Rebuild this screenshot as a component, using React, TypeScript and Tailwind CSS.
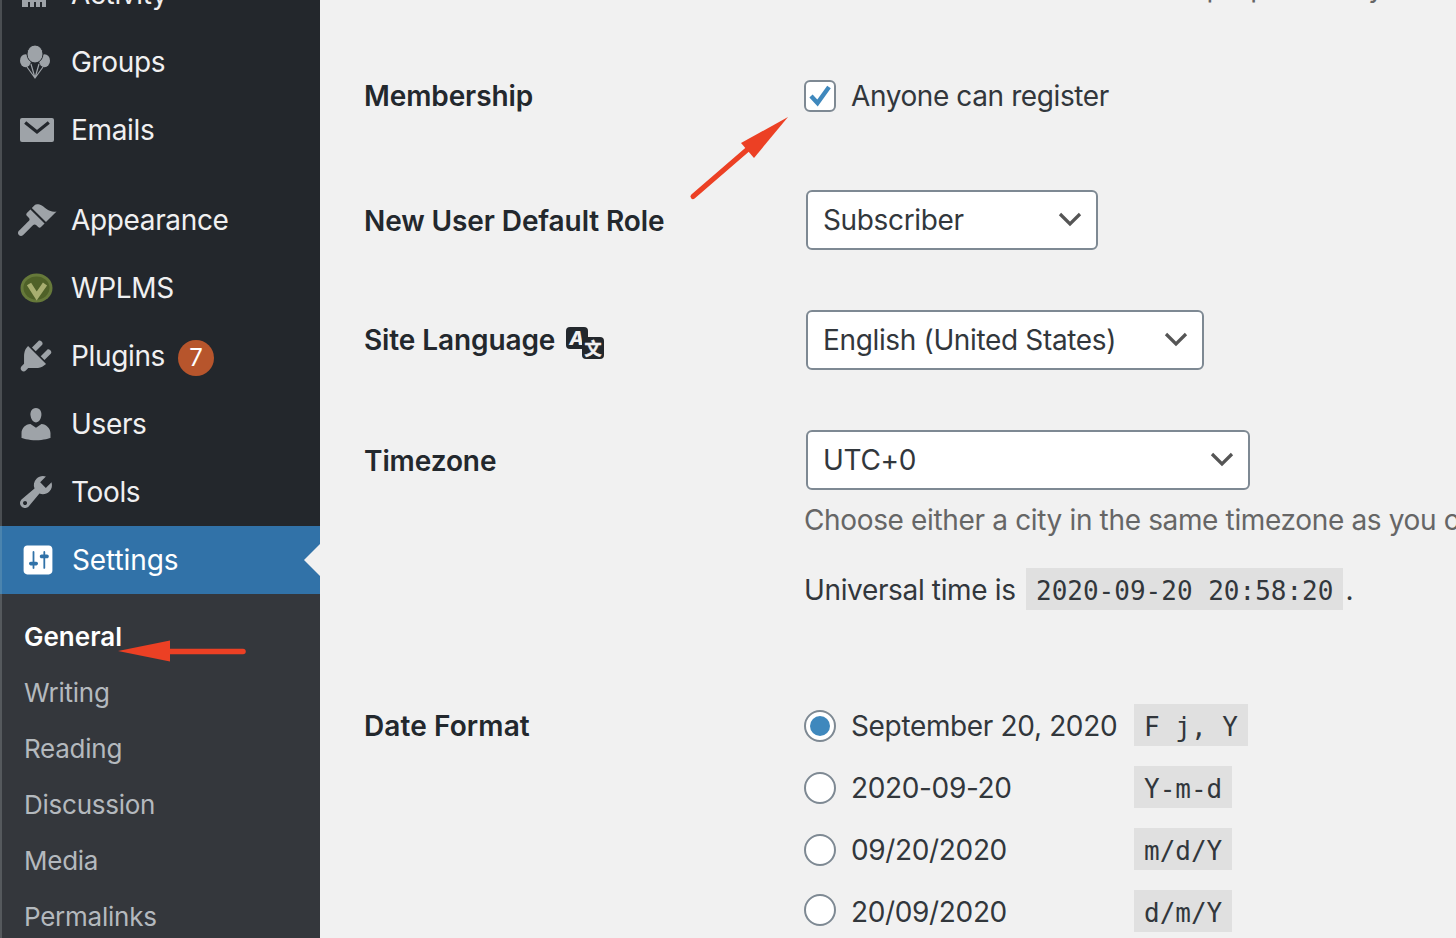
import React from "react";

const sans = "font-['Inter','Liberation_Sans',sans-serif]";

function Dash({ d, className = "w-10 h-10" }: { d: string; className?: string }) {
  return (
    <svg viewBox="0 0 20 20" className={className} fill="currentColor">
      <path d={d} />
    </svg>
  );
}

const IconActivity = () => (
  <svg viewBox="0 0 40 40" className="w-10 h-10" fill="currentColor">
    <path d="M6 24h4v-4h3v4h3v-6h4v6h3v-3h4v3h3v9h-4v-5h-2v5h-4v-5h-2v5h-4v-5h-2v5H6z" />
  </svg>
);

const IconGroups = () => (
  <svg viewBox="0 0 40 40" className="w-10 h-10" fill="currentColor">
    <ellipse cx="9.5" cy="18.7" rx="5.5" ry="6.5" />
    <ellipse cx="28.5" cy="18.7" rx="5.5" ry="6.5" />
    <ellipse cx="19" cy="12" rx="8" ry="9" stroke="#23272c" strokeWidth="1" />
    <path d="M15 22l4 14 4-14M11 25l8 11 8-11" fill="none" stroke="currentColor" strokeWidth="1.2" strokeLinejoin="round" />
  </svg>
);

const IconEmail = () => (
  <svg viewBox="0 0 20 20" className="w-10 h-10">
    <rect x="2" y="4" width="17" height="12" rx="1" fill="currentColor" />
    <path d="M4.6 6.2 10.5 11l5.9-4.8" fill="none" stroke="#23272c" strokeWidth="1.6" />
  </svg>
);

const IconWplms = () => (
  <svg viewBox="0 0 44 40" className="w-[44px] h-10 -ml-[2px] -mr-[2px]">
    <ellipse cx="22.5" cy="20" rx="16" ry="14.5" fill="#66793a" />
    <ellipse cx="22.5" cy="20" rx="13" ry="11.5" fill="#4f6128" />
    <path d="M15 16l7.7 12L31 16" fill="none" stroke="#a8ae70" strokeWidth="5" />
  </svg>
);

const IconTranslate = () => (
  <svg viewBox="0 0 40 34" className="w-10 h-[34px] ml-[11px] mt-[7px] shrink-0">
    <rect x="0" y="0" width="22" height="22" rx="4" fill="#23282d" />
    <text
      x="10.5"
      y="18"
      textAnchor="middle"
      fill="#f1f1f1"
      fontSize="19"
      fontWeight="800"
      fontStyle="italic"
      fontFamily="Inter, sans-serif"
    >
      A
    </text>
    <rect x="16" y="10" width="22" height="22" rx="4" fill="#23282d" />
    <text
      x="27"
      y="27.5"
      textAnchor="middle"
      fill="#f1f1f1"
      stroke="#f1f1f1"
      strokeWidth="0.5"
      fontSize="17"
      fontWeight="700"
      fontFamily="'Noto Sans CJK SC', sans-serif"
    >
      文
    </text>
  </svg>
);

const appearance =
  "M14.48 11.06L7.41 3.99l1.5-1.5c.5-.56 2.3-.47 3.51.32 1.21.8 1.43 1.28 2.91 2.1 1.18.64 2.45 1.26 4.45.85zm-.71.71L6.7 4.7 4.93 6.47c-.39.39-.39 1.02 0 1.41l1.06 1.06c.39.39.39 1.03 0 1.42-.6.6-5.06 5.06-5.06 5.06-.59.59-.59 1.54 0 2.12.59.59 1.53.59 2.12 0 0 0 4.46-4.46 5.06-5.06.39-.39 1.03-.39 1.42 0l1.06 1.06c.39.39 1.02.39 1.41 0z";
const plugins =
  "M13.11 4.36L9.87 7.6 8 5.73l3.24-3.24c.35-.34 1.05-.2 1.56.32.52.51.66 1.21.31 1.55zm-8 1.77l.91-1.12 9.01 9.01-1.19.84c-.71.71-2.63 1.16-3.82 1.16H6.14L4.9 17.26c-.59.59-1.54.59-2.12 0-.59-.58-.59-1.53 0-2.12l1.24-1.24v-3.88c0-1.13.4-3.19 1.09-3.89zm7.26 3.97l3.24-3.24c.34-.35 1.04-.21 1.55.31.52.51.66 1.21.31 1.55l-3.24 3.25z";
const users =
  "M10 9.25c-2.27 0-2.73-3.44-2.73-3.44C7 4.02 7.82 2 9.97 2c2.16 0 2.98 2.02 2.71 3.81 0 0-.41 3.44-2.68 3.44zm0 2.57L12.72 10c2.39 0 4.52 2.33 4.52 4.53v2.49s-3.65 1.13-7.24 1.13c-3.65 0-7.24-1.13-7.24-1.13v-2.49c0-2.25 1.94-4.48 4.47-4.48z";
const tools =
  "M16.68 9.77c-1.34 1.34-3.3 1.67-4.95.99l-5.41 6.52c-.99.99-2.59.99-3.58 0s-.99-2.59 0-3.58l6.52-5.42c-.68-1.65-.35-3.61.99-4.95 1.28-1.28 3.12-1.62 4.72-1.06l-2.89 2.89 2.82 2.82 2.86-2.87c.53 1.58.18 3.39-1.08 4.66zM3.81 16.21c.4.39 1.04.39 1.43 0 .4-.4.4-1.04 0-1.43-.39-.4-1.03-.4-1.43 0-.39.39-.39 1.03 0 1.43z";
const settings =
  "M18 16V4c0-1.1-.9-2-2-2H4c-1.1 0-2 .9-2 2v12c0 1.1.9 2 2 2h12c1.1 0 2-.9 2-2zM8 11h1c.55 0 1 .45 1 1s-.45 1-1 1H8v1.5c0 .28-.22.5-.5.5s-.5-.22-.5-.5V13H6c-.55 0-1-.45-1-1s.45-1 1-1h1V5.5c0-.28.22-.5.5-.5s.5.22.5.5V11zm5-2h-1c-.55 0-1-.45-1-1s.45-1 1-1h1V5.5c0-.28.22-.5.5-.5s.5.22.5.5V7h1c.55 0 1 .45 1 1s-.45 1-1 1h-1v5.5c0 .28-.22.5-.5.5s-.5-.22-.5-.5V9z";

function MenuItem({ icon, label, badge }: { icon: React.ReactNode; label: string; badge?: string }) {
  return (
    <div className="h-[68px] flex items-center pl-[14px]">
      <span className="text-[#9ea3a8] w-10 h-10 shrink-0 flex">{icon}</span>
      <span className="ml-[15px] text-[28px] leading-10 tracking-[-0.35px] text-[#f0f0f1]">{label}</span>
      {badge && (
        <span className="ml-[13px] mt-[3px] w-9 h-9 rounded-full bg-[#b7552c] text-white text-[24px] flex items-center justify-center">
          {badge}
        </span>
      )}
    </div>
  );
}

function Select({ value, width }: { value: string; width: string }) {
  return (
    <div
      className={`${width} ml-[2px] h-[60px] bg-white border-2 border-[#7e8993] rounded-[6px] flex items-center justify-between pl-[15px] pr-[14px] text-[28px] text-[#32373c]`}
    >
      <span>{value}</span>
      <svg viewBox="0 0 24 16" className="w-6 h-4 -mt-[2px]" fill="none" stroke="#555" strokeWidth="3.2">
        <path d="M2 3l10 10L22 3" />
      </svg>
    </div>
  );
}

function Code({ children }: { children: React.ReactNode }) {
  return (
    <code className="inline-block h-[42px] px-[10px] bg-[#e0e0e0] font-['DejaVu_Sans_Mono',monospace] text-[26px] leading-[46px] tracking-normal text-[#32373c] whitespace-pre">
      {children}
    </code>
  );
}

function DateRow({
  label,
  code,
  checked,
  radioClass = "mt-[2px]",
}: {
  label: string;
  code: string;
  checked?: boolean;
  radioClass?: string;
}) {
  return (
    <div className="flex items-center h-[42px]">
      <span
        className={`w-8 h-8 rounded-full bg-white border-2 border-[#7e8993] flex items-center justify-center shrink-0 ${radioClass}`}
      >
        {checked && <span className="w-5 h-5 rounded-full bg-[#3f88bd]" />}
      </span>
      <span className="ml-[15px] mt-[2px] w-[283px] text-[28px] text-[#32373c]">{label}</span>
      <Code>{code}</Code>
    </div>
  );
}

function Label({ children, className = "" }: { children: React.ReactNode; className?: string }) {
  return (
    <div className={`w-[440px] shrink-0 text-[28px] leading-10 font-semibold tracking-[-0.1px] text-[#23282d] ${className}`}>
      {children}
    </div>
  );
}

export default function App() {
  return (
    <div className={`relative flex h-[938px] w-[1456px] overflow-hidden bg-[#f1f1f1] ${sans}`}>
      <aside className="w-[320px] shrink-0 bg-[#23272c] flex flex-col">
        <div className="-mt-[40px] shrink-0 border-l-2 border-[#4a4e52]">
          <MenuItem icon={<IconActivity />} label="Activity" />
          <MenuItem icon={<IconGroups />} label="Groups" />
          <MenuItem icon={<IconEmail />} label="Emails" />
          <div className="h-[22px]" />
          <MenuItem icon={<span className="ml-[1px] flex"><Dash d={appearance} /></span>} label="Appearance" />
          <MenuItem icon={<IconWplms />} label="WPLMS" />
          <MenuItem icon={<Dash d={plugins} />} label="Plugins" badge="7" />
          <MenuItem icon={<Dash d={users} />} label="Users" />
          <MenuItem icon={<Dash d={tools} />} label="Tools" />
        </div>
        <div className="relative h-[68px] shrink-0 flex items-center pl-[16px] bg-[#3172a8] border-l-2 border-[#4b84ae] text-white">
          <Dash d={settings} className="w-9 h-9 ml-[2px] text-white" />
          <span className="ml-[16px] text-[28px] leading-10 tracking-[-0.1px]">Settings</span>
          <span className="absolute right-0 top-[18px] border-y-[16px] border-y-transparent border-r-[16px] border-r-[#f1f1f1]" />
        </div>
        <div className="flex-1 bg-[#34373c] border-l-2 border-[#55595d] pt-[15px] pl-[22px] text-[26px] tracking-[-0.25px] text-[#b4b9be]">
          <div className="h-14 leading-[56px] font-semibold tracking-normal text-white">General</div>
          <div className="h-14 leading-[56px]">Writing</div>
          <div className="h-14 leading-[56px]">Reading</div>
          <div className="h-14 leading-[56px]">Discussion</div>
          <div className="h-14 leading-[56px]">Media</div>
          <div className="h-14 leading-[56px]">Permalinks</div>
        </div>
      </aside>

      <main className="flex-1 min-w-0 overflow-hidden pl-[44px] flex flex-col text-[28px] tracking-[-0.35px] text-[#32373c]">
        <div className="flex -mt-[33px] h-10 shrink-0">
          <div className="w-[440px] shrink-0" />
          <div className="leading-10 whitespace-nowrap text-[#666666]">
            This address is used for admin purposes. If you change this, we will send you an email
          </div>
        </div>

        <div className="flex mt-[69px] h-10 shrink-0">
          <Label>Membership</Label>
          <div className="flex items-center">
            <span className="w-8 h-8 rounded-[6px] bg-white border-2 border-[#7e8993] flex items-center justify-center shrink-0">
              <svg viewBox="0 0 28 28" className="w-7 h-7">
                <path d="M5 14l6.5 7L23 5" fill="none" stroke="#3f88bd" strokeWidth="4.4" />
              </svg>
            </span>
            <span className="ml-[15px] leading-10 tracking-[-0.4px]">Anyone can register</span>
          </div>
        </div>

        <div className="flex mt-[74px] shrink-0">
          <Label className="pt-[11px]">New User Default Role</Label>
          <Select value="Subscriber" width="w-[292px]" />
        </div>

        <div className="flex mt-[60px] shrink-0">
          <Label className="pt-[10px] flex items-start">
            Site Language
            <IconTranslate />
          </Label>
          <Select value="English (United States)" width="w-[398px]" />
        </div>

        <div className="flex mt-[60px] shrink-0">
          <Label className="pt-[11px]">Timezone</Label>
          <div className="flex flex-col min-w-0">
            <Select value="UTC+0" width="w-[444px]" />
            <div className="mt-[10px] leading-10 whitespace-nowrap text-[#666666]">
              Choose either a city in the same timezone as you or a UTC timezone offset.
            </div>
            <div className="mt-[28px] h-[42px] flex items-center whitespace-pre">
              <span className="w-[222px] mt-[2px]">Universal time is</span>
              <Code>2020-09-20 20:58:20</Code>
              <span className="ml-[2px] mt-[2px]">.</span>
            </div>
          </div>
        </div>

        <div className="flex mt-[94px] shrink-0">
          <Label className="pt-[2px]">
            <span className="tracking-[0.1px]">Date Format</span>
          </Label>
          <div className="flex flex-col gap-5">
            <DateRow label="September 20, 2020" code="F j, Y" checked />
            <DateRow label="2020-09-20" code="Y-m-d" />
            <DateRow label="09/20/2020" code="m/d/Y" />
            <DateRow label="20/09/2020" code="d/m/Y" radioClass="-mt-[2px]" />
          </div>
        </div>
      </main>

      <svg viewBox="0 0 1456 938" className="absolute inset-0 w-[1456px] h-[938px] pointer-events-none">
        <path d="M693 196.5L748 149" stroke="#ec4024" strokeWidth="5" strokeLinecap="round" fill="none" />
        <path d="M788 117L741 143L754 158z" fill="#ec4024" />
        <path d="M168 651.5H243" stroke="#ec4024" strokeWidth="5.5" strokeLinecap="round" fill="none" />
        <path d="M118 651L170 640.5V661.5z" fill="#ec4024" />
      </svg>
    </div>
  );
}
